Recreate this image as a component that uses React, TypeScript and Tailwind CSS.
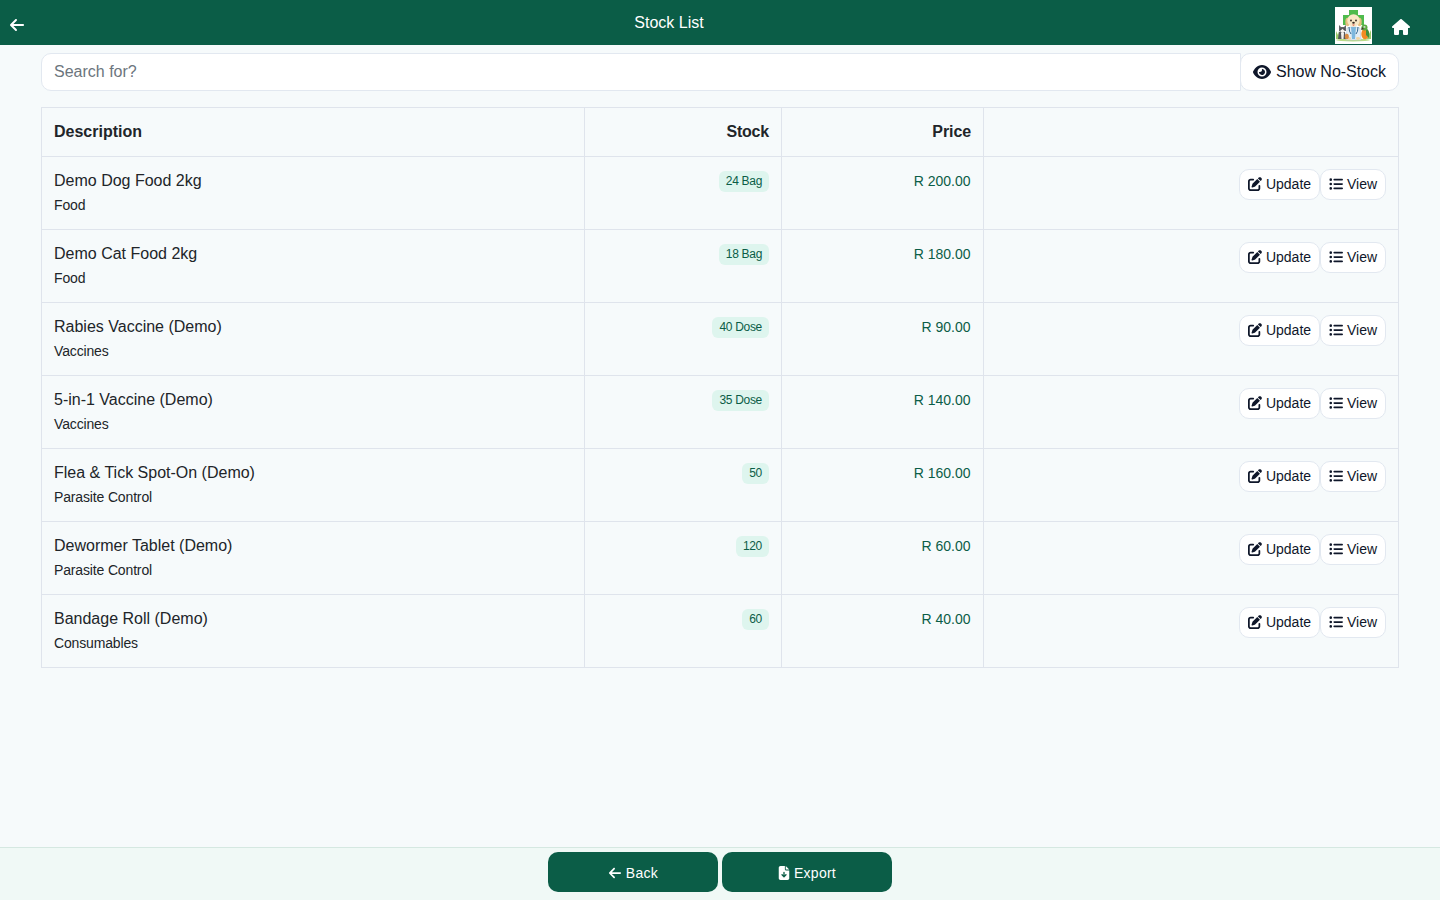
import { FaArrowLeft, FaEye, FaFileArrowDown, FaHouse, FaListUl, FaPenToSquare } from 'react-icons/fa6'

type StockItem = {
  name: string
  category: string
  stock: string
  price: string
}

const items: StockItem[] = [
  { name: 'Demo Dog Food 2kg', category: 'Food', stock: '24 Bag', price: 'R 200.00' },
  { name: 'Demo Cat Food 2kg', category: 'Food', stock: '18 Bag', price: 'R 180.00' },
  { name: 'Rabies Vaccine (Demo)', category: 'Vaccines', stock: '40 Dose', price: 'R 90.00' },
  { name: '5-in-1 Vaccine (Demo)', category: 'Vaccines', stock: '35 Dose', price: 'R 140.00' },
  { name: 'Flea & Tick Spot-On (Demo)', category: 'Parasite Control', stock: '50', price: 'R 160.00' },
  { name: 'Dewormer Tablet (Demo)', category: 'Parasite Control', stock: '120', price: 'R 60.00' },
  { name: 'Bandage Roll (Demo)', category: 'Consumables', stock: '60', price: 'R 40.00' },
]

function ClinicLogo() {
  return (
    <svg viewBox="0 0 37 37" className="w-[37px] h-[37px]">
      <rect width="37" height="37" fill="#fff" />
      <path d="M14 3h9v5h6v10H8V8h6z" fill="#4fbb4d" />
      <ellipse cx="18" cy="33" rx="17" ry="1.4" fill="#b9dc85" />
      <path d="M1 32l0-8 2 4 1-4 1 8zM32 32l1-9 1 4 2-4v9z" fill="#9acb6a" />
      {/* Dog in a coat */}
      <path d="M12 21q6-3 13 0l1 12H11z" fill="#e3edf4" stroke="#a9bfd0" strokeWidth=".5" />
      <path d="M16 20h5l-1 12h-3z" fill="#7db7dd" />
      <path d="M14 20q0 5 2 7M23 20q0 5-2 7" stroke="#2f6690" strokeWidth="1" fill="none" />
      <ellipse cx="12.5" cy="15" rx="2.2" ry="4.2" fill="#e6bf80" />
      <ellipse cx="24.5" cy="15" rx="2.2" ry="4.2" fill="#e6bf80" />
      <circle cx="18.5" cy="13.5" r="6.2" fill="#f9e8c6" />
      <circle cx="16" cy="13.5" r=".9" fill="#33251d" />
      <circle cx="21" cy="13.5" r=".9" fill="#33251d" />
      <ellipse cx="18.5" cy="15.8" rx="1.3" ry="1" fill="#33251d" />
      <path d="M17.2 17.6q1.3 2.4 2.6 0z" fill="#d9574c" />
      <ellipse cx="14" cy="31.5" rx="2" ry="1.4" fill="#f1d5a1" />
      <ellipse cx="23" cy="31.5" rx="2" ry="1.4" fill="#f1d5a1" />
      {/* Cat */}
      <path d="M4 18l2 2h3l2-2v6H4z" fill="#65666b" />
      <path d="M4 25q3-2 6 0l1 7H3z" fill="#55565b" />
      <ellipse cx="7.5" cy="24" rx="2" ry="2" fill="#f7f3ee" />
      <path d="M6 26h3l-.5 6h-2z" fill="#f3f1ee" />
      <circle cx="6" cy="22.2" r=".6" fill="#222" />
      <circle cx="9" cy="22.2" r=".6" fill="#222" />
      <ellipse cx="11.8" cy="29.5" rx="2" ry="2.8" fill="#d88a43" />
      {/* Parrot */}
      <ellipse cx="30" cy="27" rx="3.7" ry="5.2" fill="#f28b22" />
      <path d="M31 21q4 2 3 10l-3-3z" fill="#3f8f3c" />
      <ellipse cx="29.5" cy="20.5" rx="3" ry="3" fill="#5cac42" />
      <path d="M27 20l-1 3 3-1z" fill="#493b31" />
      <circle cx="29.5" cy="20" r=".9" fill="#fff" />
      <circle cx="29.5" cy="20" r=".4" fill="#222" />
    </svg>
  )
}

export default function App() {
  return (
    <div className="h-screen flex flex-col bg-[#f6fafb] text-[#212529] text-base font-['Liberation_Sans',Arial,sans-serif]">
      {/* Top bar */}
      <header className="h-[45px] shrink-0 flex bg-[#0b5d47] text-white">
        <div className="flex-1 pl-[9px] pt-[17px]">
          <FaArrowLeft className="w-4 h-4" />
        </div>
        <h1 className="pt-[11px]">Stock List</h1>
        <div className="flex-1 flex justify-end gap-5 pt-[7px] pr-[30px] pl-[81px]">
          <ClinicLogo />
          <FaHouse className="w-[18px] h-4 mt-3" />
        </div>
      </header>

      <main className="flex-1 px-[41px] pt-2">
        <div className="flex mb-4">
          <input
            type="text"
            placeholder="Search for?"
            className="flex-1 h-[38px] px-3 bg-white border border-[#e2e8f0] rounded-l-[10px] placeholder:text-[#6c757d] outline-none"
          />
          <button className="h-[38px] w-[159px] -ml-px flex items-center justify-center gap-[5px] bg-white border border-[#e2e8f0] rounded-[10px] text-[#0f172a]">
            <FaEye className="w-[18px] h-4" />
            <span className="tracking-[-0.03px]">Show No-Stock</span>
          </button>
        </div>

        <table className="w-full table-fixed border-collapse">
          <colgroup>
            <col className="w-[543px]" />
            <col className="w-[197px]" />
            <col className="w-[202px]" />
            <col />
          </colgroup>
          <thead>
            <tr>
              <th className="p-3 border border-[#dfe4ec] text-left">Description</th>
              <th className="p-3 border border-[#dfe4ec] text-right tracking-[-0.2px]">Stock</th>
              <th className="p-3 border border-[#dfe4ec] text-right tracking-[-0.1px]">Price</th>
              <th className="p-3 border border-[#dfe4ec]"></th>
            </tr>
          </thead>
          <tbody>
            {items.map((item) => (
              <tr key={item.name} className="align-top">
                <td className="p-3 border border-[#dfe4ec]">
                  <div>{item.name}</div>
                  <div className="text-sm leading-6 tracking-[-0.15px]">{item.category}</div>
                </td>
                <td className="p-3 border border-[#dfe4ec]">
                  <div className="h-6 flex items-center justify-end">
                    <span className="h-[21px] min-w-[27px] px-[7px] rounded-md bg-[#def5ee] text-[#0b5d47] text-xs leading-[21px] text-center tracking-[-0.3px]">
                      {item.stock}
                    </span>
                  </div>
                </td>
                <td className="p-3 border border-[#dfe4ec] text-right text-sm leading-6 text-[#0b5d47]">
                  <span className="pr-[0.5px]">{item.price}</span>
                </td>
                <td className="p-3 border border-[#dfe4ec]">
                  <div className="flex justify-end text-sm text-[#0f172a]">
                    <button className="h-[31px] w-[81px] pb-[2px] flex items-center justify-center gap-1 bg-white border border-[#e2e8f0] rounded-[10px]">
                      <FaPenToSquare className="w-3.5 h-3.5" />
                      Update
                    </button>
                    <button className="h-[31px] w-[66px] pb-[2px] flex items-center justify-center gap-1 bg-white border border-[#e2e8f0] rounded-[10px]">
                      <FaListUl className="w-3.5 h-3.5" />
                      View
                    </button>
                  </div>
                </td>
              </tr>
            ))}
          </tbody>
        </table>
      </main>

      {/* Bottom actions */}
      <footer className="h-[53px] shrink-0 flex justify-center gap-1 pt-1 bg-[#f0f9f6] border-t border-[#d5e8e1] text-sm text-white">
        <button className="w-[170px] h-10 flex items-center justify-center gap-1 pt-[2px] bg-[#0b5d47] rounded-[10px]">
          <FaArrowLeft className="w-3.5 h-3.5" />
          <span className="tracking-[0.3px]">Back</span>
        </button>
        <button className="w-[170px] h-10 flex items-center justify-center gap-1 pt-[2px] bg-[#0b5d47] rounded-[10px]">
          <FaFileArrowDown className="w-3 h-3.5" />
          <span className="tracking-[0.25px]">Export</span>
        </button>
      </footer>
    </div>
  )
}
